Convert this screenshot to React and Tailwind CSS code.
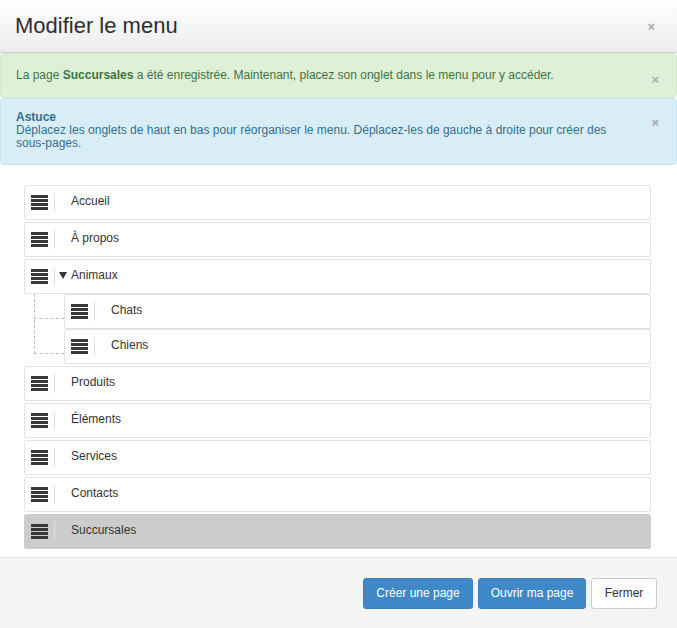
import React from "react";

const font = { fontFamily: '"Liberation Sans", Arial, Helvetica, sans-serif' };

function Handle() {
  return (
    <div className="flex flex-col gap-[1px] w-[17px]">
      <div className="h-[3px] bg-[#383838]" />
      <div className="h-[3px] bg-[#383838]" />
      <div className="h-[3px] bg-[#383838]" />
      <div className="h-[3px] bg-[#383838]" />
    </div>
  );
}

function Row({ label, caret, active, className = "" }) {
  return (
    <div
      className={`h-[35px] flex items-center border rounded-[2px] pl-[6px] ${
        active ? "bg-[#cccccc] border-[#cccccc]" : "bg-white border-[#e3e3e3]"
      } ${className}`}
    >
      <Handle />
      <div className={`ml-[6px] w-px h-[19px] ${active ? "bg-[#e0e0e0]" : "bg-[#e3e3e3]"}`} />
      {caret ? (
        <svg width="8" height="7" viewBox="0 0 8 7" className="ml-[4px] mr-[4px] mb-[2px]">
          <path d="M0 0 H8 L4 7 Z" fill="#333" />
        </svg>
      ) : (
        <span className="w-[16px]" />
      )}
      <span className="text-[12px] text-[#333] pb-[3px]">{label}</span>
    </div>
  );
}

function CloseX({ className = "" }) {
  return (
    <span className={`text-[#a8a8a8] font-bold text-[13px] leading-none ${className}`}>×</span>
  );
}

export default function App() {
  return (
    <div className="w-[677px] h-[628px] bg-white flex flex-col overflow-hidden" style={font}>
      {/* Header */}
      <div className="h-[53px] shrink-0 flex items-center justify-between pl-[15px] pr-[22px] bg-gradient-to-b from-white to-[#ececec] border-b border-[#cfcfcf]">
        <h1 className="text-[22px] text-[#2e2e2e] leading-none pb-[1px]">Modifier le menu</h1>
        <CloseX />
      </div>

      {/* Success alert */}
      <div className="h-[45px] shrink-0 flex items-center justify-between pl-[15px] pr-[17px] bg-[#dff0d8] border border-[#d3e8c8] rounded-[4px] text-[#3c763d] text-[12px]">
        <p className="pb-[2px]">
          La page <b>Succursales</b> a été enregistrée. Maintenant, placez son onglet dans le menu pour y accéder.
        </p>
        <CloseX className="mt-[7px]" />
      </div>

      {/* Info alert */}
      <div className="h-[67px] shrink-0 flex justify-between pl-[15px] pr-[17px] pt-[12px] bg-[#d9edf7] border border-[#c4e6f0] rounded-[4px] text-[#31708f] text-[12px] leading-[13px]">
        <div className="w-[600px]">
          <div className="font-bold">Astuce</div>
          <div>
            Déplacez les onglets de haut en bas pour réorganiser le menu. Déplacez-les de gauche à droite pour créer des
            sous-pages.
          </div>
        </div>
        <CloseX className="mt-[5px]" />
      </div>

      {/* List */}
      <div className="flex-1 pt-[20px] pl-[24px] pr-[26px]">
        <div className="flex flex-col gap-[2px]">
          <Row label="Accueil" />
          <Row label="À propos" />
          <div className="flex flex-col">
            <Row label="Animaux" caret />
            <div className="flex">
              <div className="w-[40px] shrink-0 relative">
                <div className="absolute left-[10px] top-0 h-[60px] border-l border-dashed border-[#bdbdbd]" />
                <div className="absolute left-[10px] top-[24px] w-[30px] border-t border-dashed border-[#bdbdbd]" />
                <div className="absolute left-[10px] top-[59px] w-[30px] border-t border-dashed border-[#bdbdbd]" />
              </div>
              <div className="flex-1 flex flex-col">
                <Row label="Chats" />
                <Row label="Chiens" />
              </div>
            </div>
          </div>
          <Row label="Produits" />
          <Row label="Éléments" />
          <Row label="Services" />
          <Row label="Contacts" />
          <Row label="Succursales" active />
        </div>
      </div>

      {/* Footer */}
      <div className="h-[71px] shrink-0 bg-[#f4f4f4] border-t border-[#e3e3e3] flex items-center justify-end gap-[5px] pr-[20px]">
        <button className="h-[31px] w-[110px] rounded-[3px] bg-[#3f89c9] border border-[#3a80bd] text-white text-[12px]">
          Créer une page
        </button>
        <button className="h-[31px] w-[108px] rounded-[3px] bg-[#3f89c9] border border-[#3a80bd] text-white text-[12px]">
          Ouvrir ma page
        </button>
        <button className="h-[31px] w-[66px] rounded-[3px] bg-white border border-[#cccccc] text-[#333] text-[12px]">
          Fermer
        </button>
      </div>
    </div>
  );
}
